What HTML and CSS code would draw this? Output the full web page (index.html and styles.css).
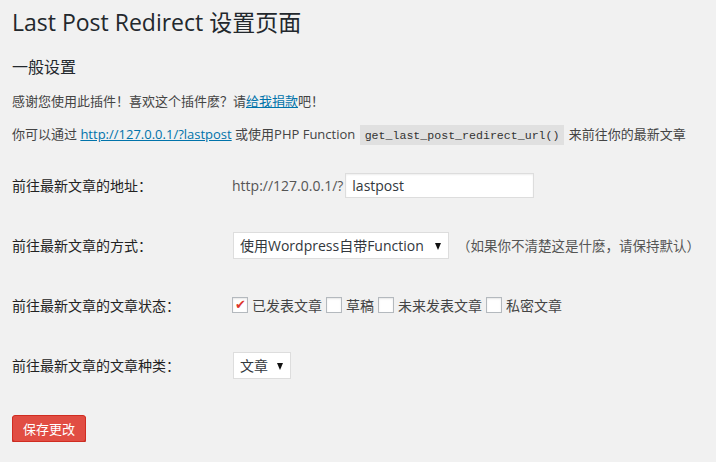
FILE: index.html
```html
<!DOCTYPE html>
<html lang="zh-CN">
<head>
    <meta charset="UTF-8">
    <title>Last Post Redirect 设置页面</title>
    <link rel="stylesheet" href="styles.css">
</head>
<body>
<div class="wrap">
    <h1>Last Post Redirect 设置页面</h1>

    <h2>一般设置</h2>

    <p>感谢您使用此插件！喜欢这个插件麽？请<a href="#">给我捐款</a>吧！</p>
    <p>你可以通过 <a href="#">http://127.0.0.1/?lastpost</a> 或使用PHP Function <code>get_last_post_redirect_url()</code> 来前往你的最新文章</p>

    <form class="form-table">
        <div class="row">
            <label class="th">前往最新文章的地址：</label>
            <div class="td">
                <span class="prefix">http://127.0.0.1/?</span>
                <input type="text" class="text-input" value="lastpost">
            </div>
        </div>
        <div class="row">
            <label class="th">前往最新文章的方式：</label>
            <div class="td">
                <span class="select-wrap wide">
                    <select>
                        <option>使用Wordpress自带Function</option>
                    </select>
                </span>
                <span class="hint">（如果你不清楚这是什麽，请保持默认）</span>
            </div>
        </div>
        <div class="row">
            <label class="th">前往最新文章的文章状态：</label>
            <div class="td checks">
                <label><input type="checkbox" checked>已发表文章</label>
                <label><input type="checkbox">草稿</label>
                <label><input type="checkbox">未来发表文章</label>
                <label><input type="checkbox">私密文章</label>
            </div>
        </div>
        <div class="row">
            <label class="th">前往最新文章的文章种类：</label>
            <div class="td">
                <span class="select-wrap">
                    <select>
                        <option>文章</option>
                    </select>
                </span>
            </div>
        </div>

        <button type="button" class="button-primary">保存更改</button>
    </form>
</div>
</body>
</html>
```

FILE: styles.css
```css
body {
    margin: 0;
    background-color: #f1f1f1;
    color: #444;
    font-family: "Open Sans", "Noto Sans CJK SC", sans-serif;
    font-size: 13px;
}
.wrap {
    padding: 0 12px;
}
h1 {
    margin: 8px 0 0;
    font-size: 23px;
    line-height: 29px;
    font-weight: 400;
    color: #23282d;
}
h2 {
    margin: 18px 0 0;
    font-size: 16px;
    line-height: 24px;
    font-weight: 400;
    color: #23282d;
}
p {
    margin: 12px 0 0;
    line-height: 20px;
    color: #444;
}
p + p {
    margin-top: 13px;
}
a {
    color: #0073aa;
    text-decoration: underline;
}
code {
    font-family: "Liberation Mono", monospace;
    font-size: 11.6px;
    background-color: rgba(0,0,0,0.07);
    padding: 4px 5px 3px;
    margin: 0 1px;
    color: #333;
}
.form-table {
    margin-top: 9px;
}
.row {
    display: flex;
    align-items: center;
    height: 60px;
}
.th {
    width: 220px;
    color: #222;
    font-size: 14px;
}
.td {
    display: flex;
    align-items: center;
    font-size: 14px;
}
.prefix {
    color: #555;
    margin-right: 2px;
}
.text-input {
    width: 189px;
    height: 25px;
    box-sizing: border-box;
    border: 1px solid #ddd;
    box-shadow: inset 0 1px 2px rgba(0,0,0,0.07);
    background: #fff;
    font-family: inherit;
    font-size: 14px;
    color: #32373c;
    padding: 0 6px;
    outline: none;
}
.select-wrap {
    position: relative;
    display: inline-block;
    margin-left: 1px;
}
.select-wrap select {
    -webkit-appearance: none;
    appearance: none;
    height: 27px;
    border: 1px solid #ddd;
    background: #fff;
    font-family: inherit;
    font-size: 14px;
    color: #32373c;
    padding: 0 22px 0 6px;
    border-radius: 0;
    outline: none;
    display: block;
}
.select-wrap.wide select {
    width: 216px;
}
.select-wrap::after {
    content: "";
    position: absolute;
    right: 8px;
    top: 11px;
    border-left: 3.5px solid transparent;
    border-right: 3.5px solid transparent;
    border-top: 7px solid #111;
    pointer-events: none;
}
.hint {
    margin-left: 8px;
    font-size: 13.5px;
    color: #555;
}
.checks {
    font-size: 14px;
    color: #444;
}
.checks label {
    display: flex;
    align-items: center;
    margin-right: 4px;
}
.checks input {
    -webkit-appearance: none;
    appearance: none;
    width: 16px;
    height: 16px;
    margin: 0 4px 0 0;
    border: 1px solid #b4b9be;
    background: #fff;
    box-shadow: inset 0 1px 2px rgba(0,0,0,0.1);
    position: relative;
}
.checks input:checked::before {
    content: "✔";
    position: absolute;
    left: 2px;
    top: -1px;
    font-size: 13px;
    color: #dd382d;
}
.button-primary {
    margin-top: 20px;
    height: 27px;
    width: 74px;
    background-color: #e14d43;
    border: 1px solid #d02c21;
    border-radius: 3px;
    box-shadow: 0 1px 0 #ba281e;
    color: #fff;
    font-family: inherit;
    font-size: 13px;
    cursor: pointer;
}
```
